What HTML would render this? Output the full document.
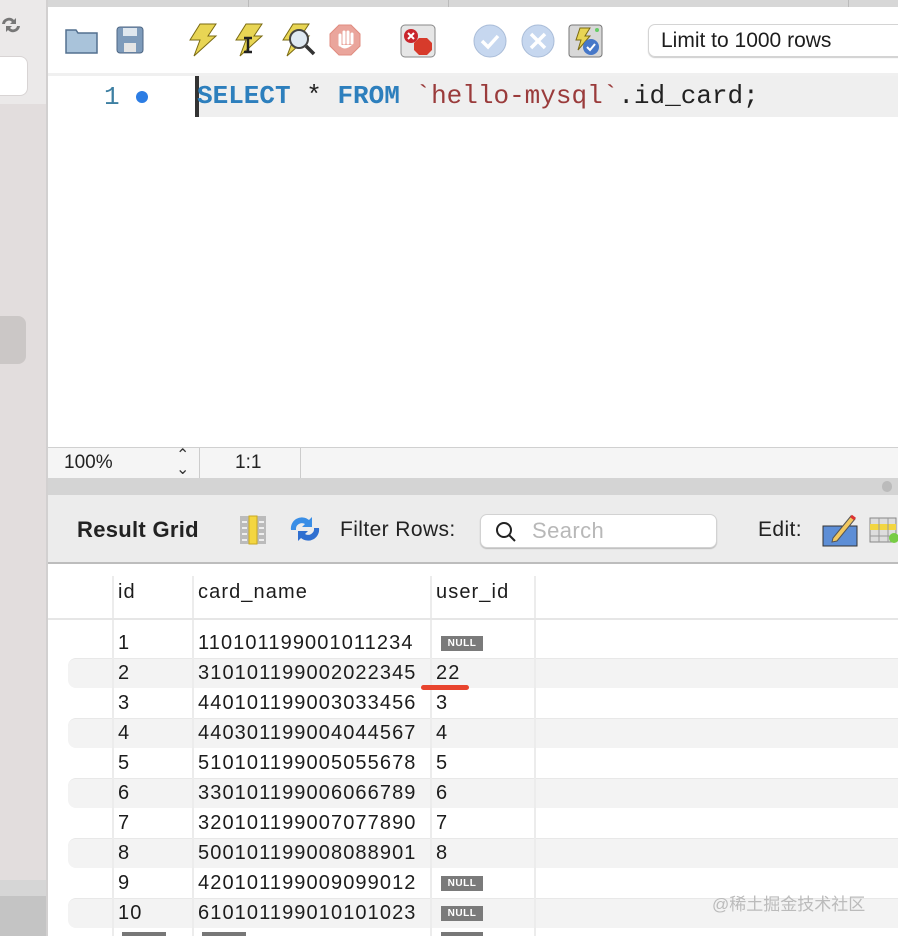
<!DOCTYPE html>
<html><head><meta charset="utf-8"><style>
*{margin:0;padding:0;box-sizing:border-box}
body{width:898px;height:936px;overflow:hidden;background:#fff;font-family:"Liberation Sans",Helvetica,sans-serif;position:relative}
.a{position:absolute}
.t{font-size:20px;letter-spacing:1.1px;color:#1c1c1c}
.null{position:absolute;left:441px;width:42px;height:15px;background:#7a7a7a;color:#fff;font-size:10px;font-weight:bold;text-align:center;line-height:15px;letter-spacing:.5px}
</style></head><body>
<!-- sidebar -->
<div class="a" style="left:0;top:0;width:46px;height:104px;background:#ebe9e9"></div>
<div class="a" style="left:0;top:104px;width:46px;height:776px;background:#e2dddd"></div>
<div class="a" style="left:46px;top:0;width:2px;height:936px;background:#d2d0d0"></div>
<div class="a" style="left:0;top:56px;width:28px;height:40px;background:#fff;border-radius:0 8px 8px 0;border:1px solid #d8d4d4;border-left:none"></div>
<div class="a" style="left:0;top:316px;width:26px;height:48px;background:#cbc7c6;border-radius:0 8px 8px 0"></div>
<div class="a" style="left:0;top:880px;width:46px;height:16px;background:#d6d6d6"></div>
<div class="a" style="left:0;top:896px;width:46px;height:40px;background:#c4c4c4"></div>
<svg class="a" style="left:0;top:14px" width="22" height="22" viewBox="0 0 22 22"><path d="M2 10a7 7 0 0 1 12-4l2-2v6h-6l2-2a4 4 0 0 0-7 2z" fill="#777"/><path d="M20 12a7 7 0 0 1-12 4l-2 2v-6h6l-2 2a4 4 0 0 0 7-2z" fill="#777"/></svg>
<!-- top strip -->
<div class="a" style="left:48px;top:0;width:850px;height:7px;background:#d7d7d7"></div>
<div class="a" style="left:248px;top:0;width:1px;height:7px;background:#bbb"></div>
<div class="a" style="left:448px;top:0;width:1px;height:7px;background:#bbb"></div>
<div class="a" style="left:848px;top:0;width:1px;height:7px;background:#bbb"></div>
<!-- toolbar icons -->
<svg class="a" style="left:64px;top:24px" width="36" height="32"><path d="M2 6h10l2 3h19v20H2z" fill="#a9c3da" stroke="#53708f" stroke-width="1.5"/></svg>
<svg class="a" style="left:115px;top:25px" width="32" height="30"><rect x="2" y="2" width="26" height="26" rx="3" fill="#7e9bbb" stroke="#4d6683"/><rect x="8" y="3" width="14" height="8" fill="#dfe7ef"/><rect x="9" y="18" width="12" height="9" fill="#e5e5e5"/></svg>
<svg class="a" style="left:186px;top:22px" width="34" height="36"><path d="M14 2h16l-8 12h8L8 34l6-16H4z" fill="#e8d554" stroke="#7a6a12"/></svg>
<svg class="a" style="left:232px;top:22px" width="34" height="36"><path d="M14 2h16l-8 12h8L8 34l6-16H4z" fill="#e8d554" stroke="#7a6a12"/><path d="M12 16h8M16 16v14M12 30h8" stroke="#222" stroke-width="2.5"/></svg>
<svg class="a" style="left:279px;top:22px" width="38" height="36"><path d="M14 2h16l-8 12h8L8 34l6-16H4z" fill="#e8d554" stroke="#7a6a12"/><circle cx="20" cy="17" r="9" fill="#dfe9f2" stroke="#444" stroke-width="2"/><path d="M27 24l8 8" stroke="#333" stroke-width="3.5"/></svg>
<svg class="a" style="left:328px;top:23px" width="36" height="34"><path d="M11 2h12l9 9v12l-9 9H11l-9-9V11z" fill="#eaa59c" stroke="#e08c80"/><path d="M12 22v-10M16 20V9M20 20V9M24 20v-9" stroke="#fff" stroke-width="3" stroke-linecap="round"/><path d="M11 22q5 7 13 0" fill="#fff"/></svg>
<svg class="a" style="left:400px;top:24px" width="36" height="34"><rect x="1" y="1" width="34" height="32" rx="4" fill="#e6e6e6" stroke="#888"/><circle cx="11" cy="12" r="7" fill="#c9252c"/><path d="M8 9l6 6M14 9l-6 6" stroke="#fff" stroke-width="2"/><path d="M19 14h8l5 5v7l-5 5h-8l-5-5v-7z" fill="#d73b2b"/></svg>
<svg class="a" style="left:472px;top:24px" width="36" height="34"><circle cx="18" cy="17" r="16" fill="#c6d7ef" stroke="#a9bcd8"/><path d="M10 17l6 6 10-11" stroke="#fff" stroke-width="3.5" fill="none"/></svg>
<svg class="a" style="left:520px;top:24px" width="36" height="34"><circle cx="18" cy="17" r="16" fill="#c6d7ef" stroke="#a9bcd8"/><path d="M11 10l14 14M25 10L11 24" stroke="#fff" stroke-width="3.5"/></svg>
<svg class="a" style="left:568px;top:24px" width="36" height="34"><rect x="1" y="1" width="33" height="32" rx="3" fill="#d8d8d8" stroke="#777"/><path d="M12 4h10l-5 8h5L10 26l3-10H8z" fill="#e8d554" stroke="#7a6a12"/><circle cx="23" cy="23" r="8" fill="#4778c8"/><path d="M19 23l3 3 5-6" stroke="#fff" stroke-width="2" fill="none"/><circle cx="29" cy="6" r="2" fill="#6c6"/></svg>
<div class="a" style="left:648px;top:24px;width:260px;height:33px;border:1px solid #d4d4d4;border-radius:7px;box-shadow:0 1px 1px #ccc;font-size:21px;line-height:31px;padding-left:12px;color:#1d1d1d">Limit to 1000 rows</div>
<!-- editor -->
<div class="a" style="left:48px;top:73px;width:850px;height:3px;background:#f0f0f0"></div>
<div class="a" style="left:195px;top:76px;width:703px;height:41px;background:#efefef"></div>
<div class="a" style="left:195px;top:76px;width:4px;height:41px;background:#333"></div>
<div class="a" style="left:104px;top:82px;font-family:'Liberation Mono',monospace;font-size:26px;color:#3d7fa2">1</div>
<div class="a" style="left:136px;top:91px;width:12px;height:12px;border-radius:50%;background:#2c7de4"></div>
<div class="a" style="left:197px;top:81px;font-family:'Liberation Mono',monospace;font-size:26px;white-space:pre;color:#222"><span style="color:#2d7fbd;font-weight:bold">SELECT</span> * <span style="color:#2d7fbd;font-weight:bold">FROM</span> <span style="color:#9a3b3b">`hello-mysql`</span>.id_card;</div>
<!-- status -->
<div class="a" style="left:48px;top:447px;width:850px;height:31px;background:#f5f5f5;border-top:1px solid #d0d0d0"></div>
<div class="a" style="left:64px;top:452px;font-size:19px;color:#222">100%</div>
<div class="a" style="left:176px;top:449px;font-size:16px;color:#333;line-height:14px">⌃<br>⌄</div>
<div class="a" style="left:199px;top:448px;width:1px;height:30px;background:#ccc"></div>
<div class="a" style="left:235px;top:452px;font-size:19px;color:#222">1:1</div>
<div class="a" style="left:300px;top:448px;width:1px;height:30px;background:#ccc"></div>
<div class="a" style="left:48px;top:478px;width:850px;height:17px;background:#d4d4d4"></div>
<div class="a" style="left:882px;top:481px;width:10px;height:11px;border-radius:5px;background:#bbb"></div>
<!-- result toolbar -->
<div class="a" style="left:48px;top:495px;width:850px;height:67px;background:#ececec"></div>
<div class="a" style="left:48px;top:562px;width:850px;height:2px;background:#bdbdbd"></div>
<div class="a" style="left:77px;top:517px;font-size:22px;font-weight:bold;color:#222;letter-spacing:.3px">Result Grid</div>
<svg class="a" style="left:238px;top:514px" width="30" height="32"><rect x="2" y="2" width="26" height="28" fill="#bbb"/><rect x="11" y="2" width="8" height="28" fill="#f3d641" stroke="#c9a820"/><path d="M4 8h5M4 14h5M4 20h5M4 26h5M21 8h5M21 14h5M21 20h5M21 26h5" stroke="#eee" stroke-width="2"/></svg>
<svg class="a" style="left:288px;top:514px" width="34" height="30"><path d="M3 16a11 11 0 0 1 18-10l3-3v10h-10l3-3a6 6 0 0 0-9 6z" fill="#3a8ee6"/><path d="M31 14a11 11 0 0 1-18 10l-3 3V17h10l-3 3a6 6 0 0 0 9-6z" fill="#2f6fd0"/></svg>
<div class="a" style="left:340px;top:518px;font-size:21px;color:#222;letter-spacing:.4px">Filter Rows:</div>
<div class="a" style="left:480px;top:514px;width:237px;height:34px;background:#fff;border:1px solid #d2d2d2;border-radius:7px;box-shadow:0 1px 1px #bbb"></div>
<svg class="a" style="left:494px;top:520px" width="24" height="24"><circle cx="10" cy="10" r="7" fill="none" stroke="#222" stroke-width="2"/><path d="M15 15l6 6" stroke="#222" stroke-width="2"/></svg>
<div class="a" style="left:532px;top:518px;font-size:22px;color:#b8b8b8;letter-spacing:.4px">Search</div>
<div class="a" style="left:758px;top:518px;font-size:21px;color:#222;letter-spacing:.4px">Edit:</div>
<svg class="a" style="left:821px;top:512px" width="40" height="36"><rect x="2" y="14" width="34" height="20" fill="#5d8ed6" stroke="#333"/><path d="M12 26L30 4l4 3-18 22-5 1z" fill="#f2c860" stroke="#555"/><path d="M30 4l4 3" stroke="#d33" stroke-width="3"/></svg>
<svg class="a" style="left:868px;top:516px" width="30" height="30"><rect x="2" y="2" width="26" height="24" fill="#ddd" stroke="#888"/><rect x="2" y="8" width="26" height="6" fill="#f3d641"/><path d="M2 20h26M11 2v24M20 2v24" stroke="#999"/><circle cx="26" cy="22" r="5" fill="#7c4"/></svg>
<!-- grid -->
<div class="a" style="left:48px;top:564px;width:850px;height:372px;background:#fff"></div>
<div class="a" style="left:48px;top:618px;width:850px;height:2px;background:#e6e6e6"></div>
<div class="a t" style="left:118px;top:581px">id</div>
<div class="a t" style="left:198px;top:581px">card_name</div>
<div class="a t" style="left:436px;top:581px">user_id</div>
<div class="a" style="left:112px;top:576px;width:2px;height:42px;background:#ececec"></div>
<div class="a" style="left:192px;top:576px;width:2px;height:42px;background:#ececec"></div>
<div class="a" style="left:430px;top:576px;width:2px;height:42px;background:#ececec"></div>
<div class="a" style="left:534px;top:576px;width:2px;height:42px;background:#ececec"></div>
<div class="a" style="left:68px;top:658px;width:830px;height:30px;background:#f3f3f3;border-radius:8px 0 0 8px;border-top:1px solid #e8e8e8"></div>
<div class="a" style="left:68px;top:718px;width:830px;height:30px;background:#f3f3f3;border-radius:8px 0 0 8px;border-top:1px solid #e8e8e8"></div>
<div class="a" style="left:68px;top:778px;width:830px;height:30px;background:#f3f3f3;border-radius:8px 0 0 8px;border-top:1px solid #e8e8e8"></div>
<div class="a" style="left:68px;top:838px;width:830px;height:30px;background:#f3f3f3;border-radius:8px 0 0 8px;border-top:1px solid #e8e8e8"></div>
<div class="a" style="left:68px;top:898px;width:830px;height:30px;background:#f3f3f3;border-radius:8px 0 0 8px;border-top:1px solid #e8e8e8"></div>
<div class="a" style="left:112px;top:620px;width:2px;height:316px;background:#ececec"></div>
<div class="a" style="left:192px;top:620px;width:2px;height:316px;background:#ececec"></div>
<div class="a" style="left:430px;top:620px;width:2px;height:316px;background:#ececec"></div>
<div class="a" style="left:534px;top:620px;width:2px;height:316px;background:#ececec"></div>
<div class="a t" style="left:118px;top:632px">1</div><div class="a t" style="left:198px;top:632px">110101199001011234</div><div class="null" style="top:636px">NULL</div>
<div class="a t" style="left:118px;top:662px">2</div><div class="a t" style="left:198px;top:662px">310101199002022345</div><div class="a t" style="left:436px;top:662px">22</div>
<div class="a" style="left:421px;top:685px;width:48px;height:5px;border-radius:3px;background:#e8442e"></div>
<div class="a t" style="left:118px;top:692px">3</div><div class="a t" style="left:198px;top:692px">440101199003033456</div><div class="a t" style="left:436px;top:692px">3</div>
<div class="a t" style="left:118px;top:722px">4</div><div class="a t" style="left:198px;top:722px">440301199004044567</div><div class="a t" style="left:436px;top:722px">4</div>
<div class="a t" style="left:118px;top:752px">5</div><div class="a t" style="left:198px;top:752px">510101199005055678</div><div class="a t" style="left:436px;top:752px">5</div>
<div class="a t" style="left:118px;top:782px">6</div><div class="a t" style="left:198px;top:782px">330101199006066789</div><div class="a t" style="left:436px;top:782px">6</div>
<div class="a t" style="left:118px;top:812px">7</div><div class="a t" style="left:198px;top:812px">320101199007077890</div><div class="a t" style="left:436px;top:812px">7</div>
<div class="a t" style="left:118px;top:842px">8</div><div class="a t" style="left:198px;top:842px">500101199008088901</div><div class="a t" style="left:436px;top:842px">8</div>
<div class="a t" style="left:118px;top:872px">9</div><div class="a t" style="left:198px;top:872px">420101199009099012</div><div class="null" style="top:876px">NULL</div>
<div class="a t" style="left:118px;top:902px">10</div><div class="a t" style="left:198px;top:902px">610101199010101023</div><div class="null" style="top:906px">NULL</div>
<div class="a" style="left:122px;top:932px;width:44px;height:4px;background:#777"></div>
<div class="a" style="left:202px;top:932px;width:44px;height:4px;background:#777"></div>
<div class="a" style="left:441px;top:932px;width:42px;height:4px;background:#777"></div>
<div class="a" style="left:712px;top:890px;font-family:'Liberation Sans','Noto Sans CJK SC',sans-serif;font-size:17px;color:#bbb">@稀土掘金技术社区</div>
</body></html>
